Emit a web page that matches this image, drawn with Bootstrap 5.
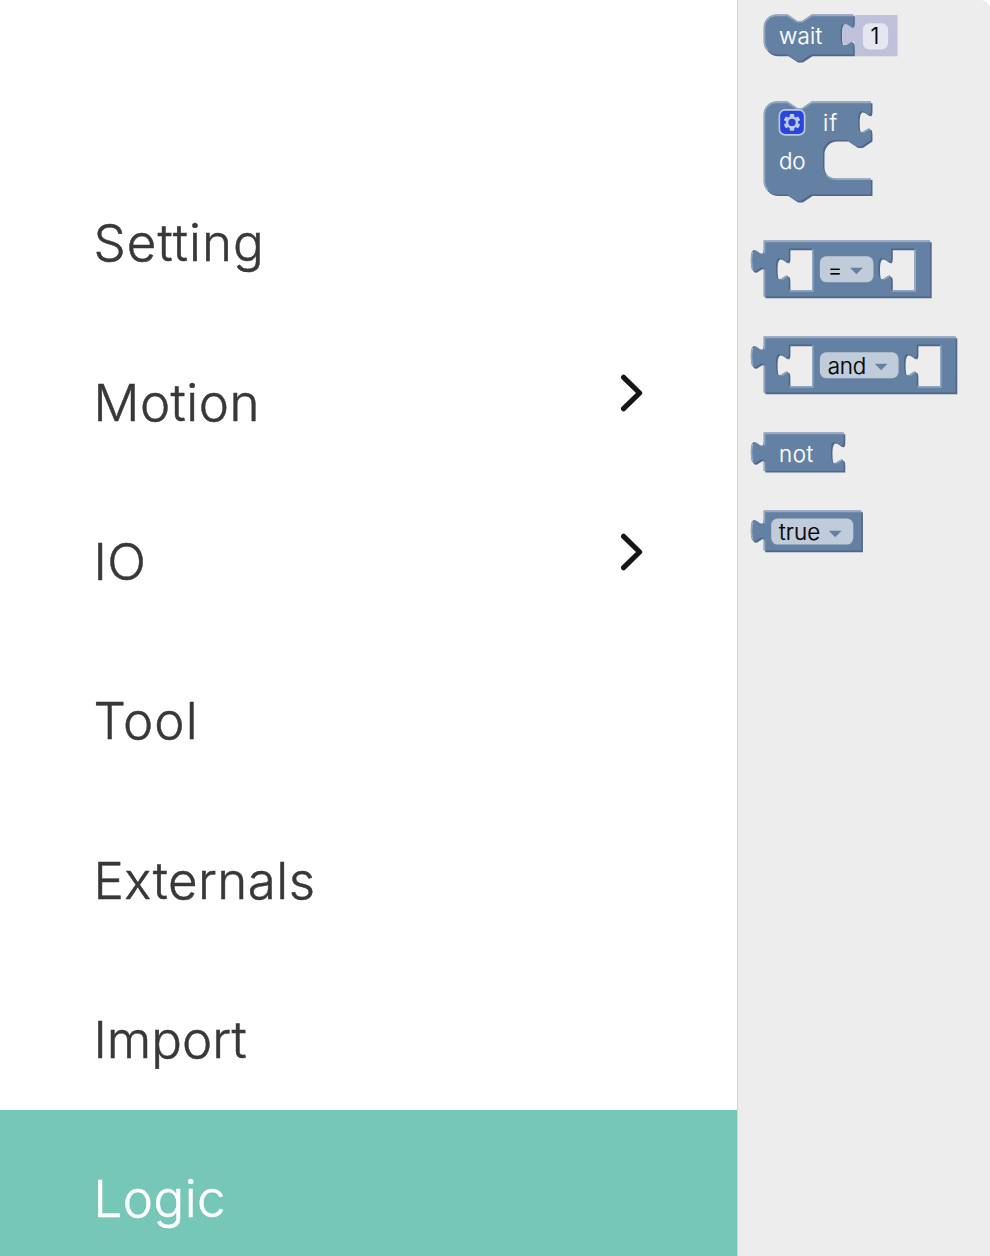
<!DOCTYPE html>
<html lang="en">
<head>
<meta charset="utf-8">
<meta name="viewport" content="width=device-width, initial-scale=1">
<title>Block toolbox</title>
<link href="https://cdn.jsdelivr.net/npm/bootstrap@5.3.0/dist/css/bootstrap.min.css" rel="stylesheet">
<style>
  body { font-family: Inter, "Open Sans", sans-serif; background: #fff; }
  .toolbox { width: 737px; padding-top: 154px; }
  .category { height: 159.33px; padding: 0 93px 0 93.5px; color: #383838; font-size: 51px; font-weight: 300; line-height: 61px; -webkit-text-stroke: .5px currentColor; }
  .category span { margin-top: 18.5px; letter-spacing: .48px; }
  .category .loose { letter-spacing: 1.1px; }
  .category .snug { letter-spacing: 0; }
  .category.active { background: #77c7b8; color: #fff; }
  .flyout { background: #ededed; border-left: 1px solid #d2d2d2; border-top-right-radius: 9px; padding: 13.4px 0 0 10px; }
  .flyout svg { display: block; width: 232px; flex: none; overflow: visible; }
  .shape { fill: #6480a3; fill-rule: evenodd; }
  .shade { fill: #4e6789; fill-rule: evenodd; }
  .lit { fill: none; stroke: #93a8c1; stroke-width: 1; }
  .field { fill: #c1ccda; }
  .flyout text { font-size: 14px; font-weight: 300; fill: #fff; stroke: #fff; stroke-width: .15px; }
  .flyout text.value { fill: #000; stroke: #000; }
</style>
</head>
<body>
<div class="d-flex vh-100 overflow-hidden">
  <nav class="toolbox d-flex flex-column flex-shrink-0">
    <div class="category d-flex align-items-center justify-content-between flex-shrink-0"><span class="loose">Setting</span></div>
    <div class="category d-flex align-items-center justify-content-between flex-shrink-0"><span>Motion</span>
      <svg width="24" height="40" viewBox="0 0 24 40" fill="none" stroke="#161616" stroke-width="5.2" stroke-linecap="round" stroke-linejoin="round"><path d="M3.6 4.3 19.6 20 3.6 35.7"/></svg></div>
    <div class="category d-flex align-items-center justify-content-between flex-shrink-0"><span>IO</span>
      <svg width="24" height="40" viewBox="0 0 24 40" fill="none" stroke="#161616" stroke-width="5.2" stroke-linecap="round" stroke-linejoin="round"><path d="M3.6 4.3 19.6 20 3.6 35.7"/></svg></div>
    <div class="category d-flex align-items-center justify-content-between flex-shrink-0"><span class="loose">Tool</span></div>
    <div class="category d-flex align-items-center justify-content-between flex-shrink-0"><span>Externals</span></div>
    <div class="category d-flex align-items-center justify-content-between flex-shrink-0"><span class="snug">Import</span></div>
    <div class="category active d-flex align-items-center justify-content-between flex-shrink-0"><span>Logic</span></div>
  </nav>

  <aside class="flyout flex-grow-1 d-flex flex-column">
    <!-- wait -->
    <svg height="86.4" viewBox="-9.8 -1 145 54">
      <defs><path id="s1" d="M0 8A8 8 0 0 1 8 0H15l6 4 3 0 6-4H56V5c0 10-8-8-8 7.5s8-2.5 8 7.5V25H29.5l-6 4-3 0-6-4H8A8 8 0 0 1 0 17Z"/></defs>
      <use href="#s1" class="shade" x="1" y="1"/><use href="#s1" class="shape"/>
      <path class="lit" d="M2.7 22.3A7.5 7.5 0 0 1 .5 17V8A7.5 7.5 0 0 1 8 .5H14.8l6 4 3.4 0 6-4H56"/>
      <path fill="#bfc1da" d="M57 0.3H83.7V26H57V20c0-10-8 8-8-7.5s8 2.5 8-7.5Z"/>
      <rect x="62" y="5.4" width="15.8" height="16.4" rx="4" fill="#e5e7f0"/>
      <text x="9.6" y="18.5" textLength="27">wait</text>
      <text class="value" x="66.7" y="18.5">1</text>
    </svg>
    <!-- if / do -->
    <svg height="139.2" viewBox="-9.8 -1 145 87">
      <defs><path id="s2" d="M0 8A8 8 0 0 1 8 0H15l6 4 3 0 6-4H67V5c0 10-8-8-8 7.5s8-2.5 8 7.5V24l-6 4-3 0-6-4H45A8 8 0 0 0 37 32V40A8 8 0 0 0 45 48H67V58H29.5l-6 4-3 0-6-4H8A8 8 0 0 1 0 50Z"/></defs>
      <use href="#s2" class="shade" x="1" y="1"/><use href="#s2" class="shape"/>
      <path class="lit" d="M2.7 55.3A7.5 7.5 0 0 1 .5 50V8A7.5 7.5 0 0 1 8 .5H14.8l6 4 3.4 0 6-4H67M62 19.3l3.68-2.1M39.1 45.9A8.5 8.5 0 0 0 45 48.5H67"/>
      <rect x="9.8" y="5.2" width="15.8" height="15.6" rx="3.6" fill="#2846dc" stroke="#bcc9e2" stroke-width="1"/>
      <g transform="translate(17.7 13)" fill="#bfc9e0">
        <rect x="-1.4" y="-5.2" width="2.8" height="10.4" rx=".5"/><rect x="-1.4" y="-5.2" width="2.8" height="10.4" rx=".5" transform="rotate(60)"/><rect x="-1.4" y="-5.2" width="2.8" height="10.4" rx=".5" transform="rotate(120)"/>
        <circle r="3.9"/><circle r="2.3" fill="#2846dc"/>
      </g>
      <text x="37" y="18.2" textLength="9">if</text>
      <text x="9.6" y="42.3" textLength="16.5">do</text>
    </svg>
    <!-- comparison -->
    <svg height="96" viewBox="-9.8 -1 145 60">
      <defs><path id="s3" d="M0 0H104V35H0V20c0-10-8 8-8-7.5s8 2.5 8-7.5ZM15.7 5H30.2V31H15.7V25c0-10-8 8-8-7.5s8 2.5 8-7.5ZM79.7 5H94.2V31H79.7V25c0-10-8 8-8-7.5s8 2.5 8-7.5Z"/></defs>
      <use href="#s3" class="shade" x="1" y="1"/><use href="#s3" class="shape"/>
      <path class="lit" d="M.5 35V18.5M-6.86 18q-1.52-5.5 0-11M.5 8V.5H104M30.7 5.5V31.5H16.2M10.9 24.3l3.68-2.1M94.7 5.5V31.5H80.2M74.9 24.3l3.68-2.1"/>
      <rect class="field" x="35.1" y="9.8" width="33.5" height="16.2" rx="4"/>
      <text class="value" x="40" y="23.2">=</text>
      <path fill="#6480a3" d="M54 17H62L58 21Z"/>
    </svg>
    <!-- and -->
    <svg height="96" viewBox="-9.8 -1 145 60">
      <defs><path id="s4" d="M0 0H120V35H0V20c0-10-8 8-8-7.5s8 2.5 8-7.5ZM15.7 5H30.2V31H15.7V25c0-10-8 8-8-7.5s8 2.5 8-7.5ZM95.7 5H110.2V31H95.7V25c0-10-8 8-8-7.5s8 2.5 8-7.5Z"/></defs>
      <use href="#s4" class="shade" x="1" y="1"/><use href="#s4" class="shape"/>
      <path class="lit" d="M.5 35V18.5M-6.86 18q-1.52-5.5 0-11M.5 8V.5H120M30.7 5.5V31.5H16.2M10.9 24.3l3.68-2.1M110.7 5.5V31.5H96.2M90.9 24.3l3.68-2.1"/>
      <rect class="field" x="35.1" y="9.8" width="49.2" height="16.2" rx="4"/>
      <text class="value" x="40.1" y="23.1" textLength="24">and</text>
      <path fill="#6480a3" d="M69.4 17H77.4L73.4 21Z"/>
    </svg>
    <!-- not -->
    <svg height="78.4" viewBox="-9.8 -1 145 49">
      <defs><path id="s5" d="M0 0H50V5c0 10-8-8-8 7.5s8-2.5 8 7.5V24H0V20c0-10-8 8-8-7.5s8 2.5 8-7.5Z"/></defs>
      <use href="#s5" class="shade" x="1" y="1"/><use href="#s5" class="shape"/>
      <path class="lit" d="M.5 24V18.5M-6.86 18q-1.52-5.5 0-11M.5 8V.5H50M45 19.3l3.68-2.1"/>
      <text x="9.6" y="18.2" textLength="21.3">not</text>
    </svg>
    <!-- true -->
    <svg height="56" viewBox="-9.8 -1 145 35">
      <defs><path id="s6" d="M0 0H61V25H0V20c0-10-8 8-8-7.5s8 2.5 8-7.5Z"/></defs>
      <use href="#s6" class="shade" x="1" y="1"/><use href="#s6" class="shape"/>
      <path class="lit" d="M.5 25V18.5M-6.86 18q-1.52-5.5 0-11M.5 8V.5H61"/>
      <rect class="field" x="4.7" y="5" width="51.3" height="16.2" rx="4"/>
      <text class="value" x="9.6" y="18.5" textLength="25.8">true</text>
      <path fill="#6480a3" d="M40.7 12.6H48.7L44.7 16.6Z"/>
    </svg>
  </aside>
</div>
<script src="https://cdn.jsdelivr.net/npm/bootstrap@5.3.0/dist/js/bootstrap.bundle.min.js"></script>
</body>
</html>
